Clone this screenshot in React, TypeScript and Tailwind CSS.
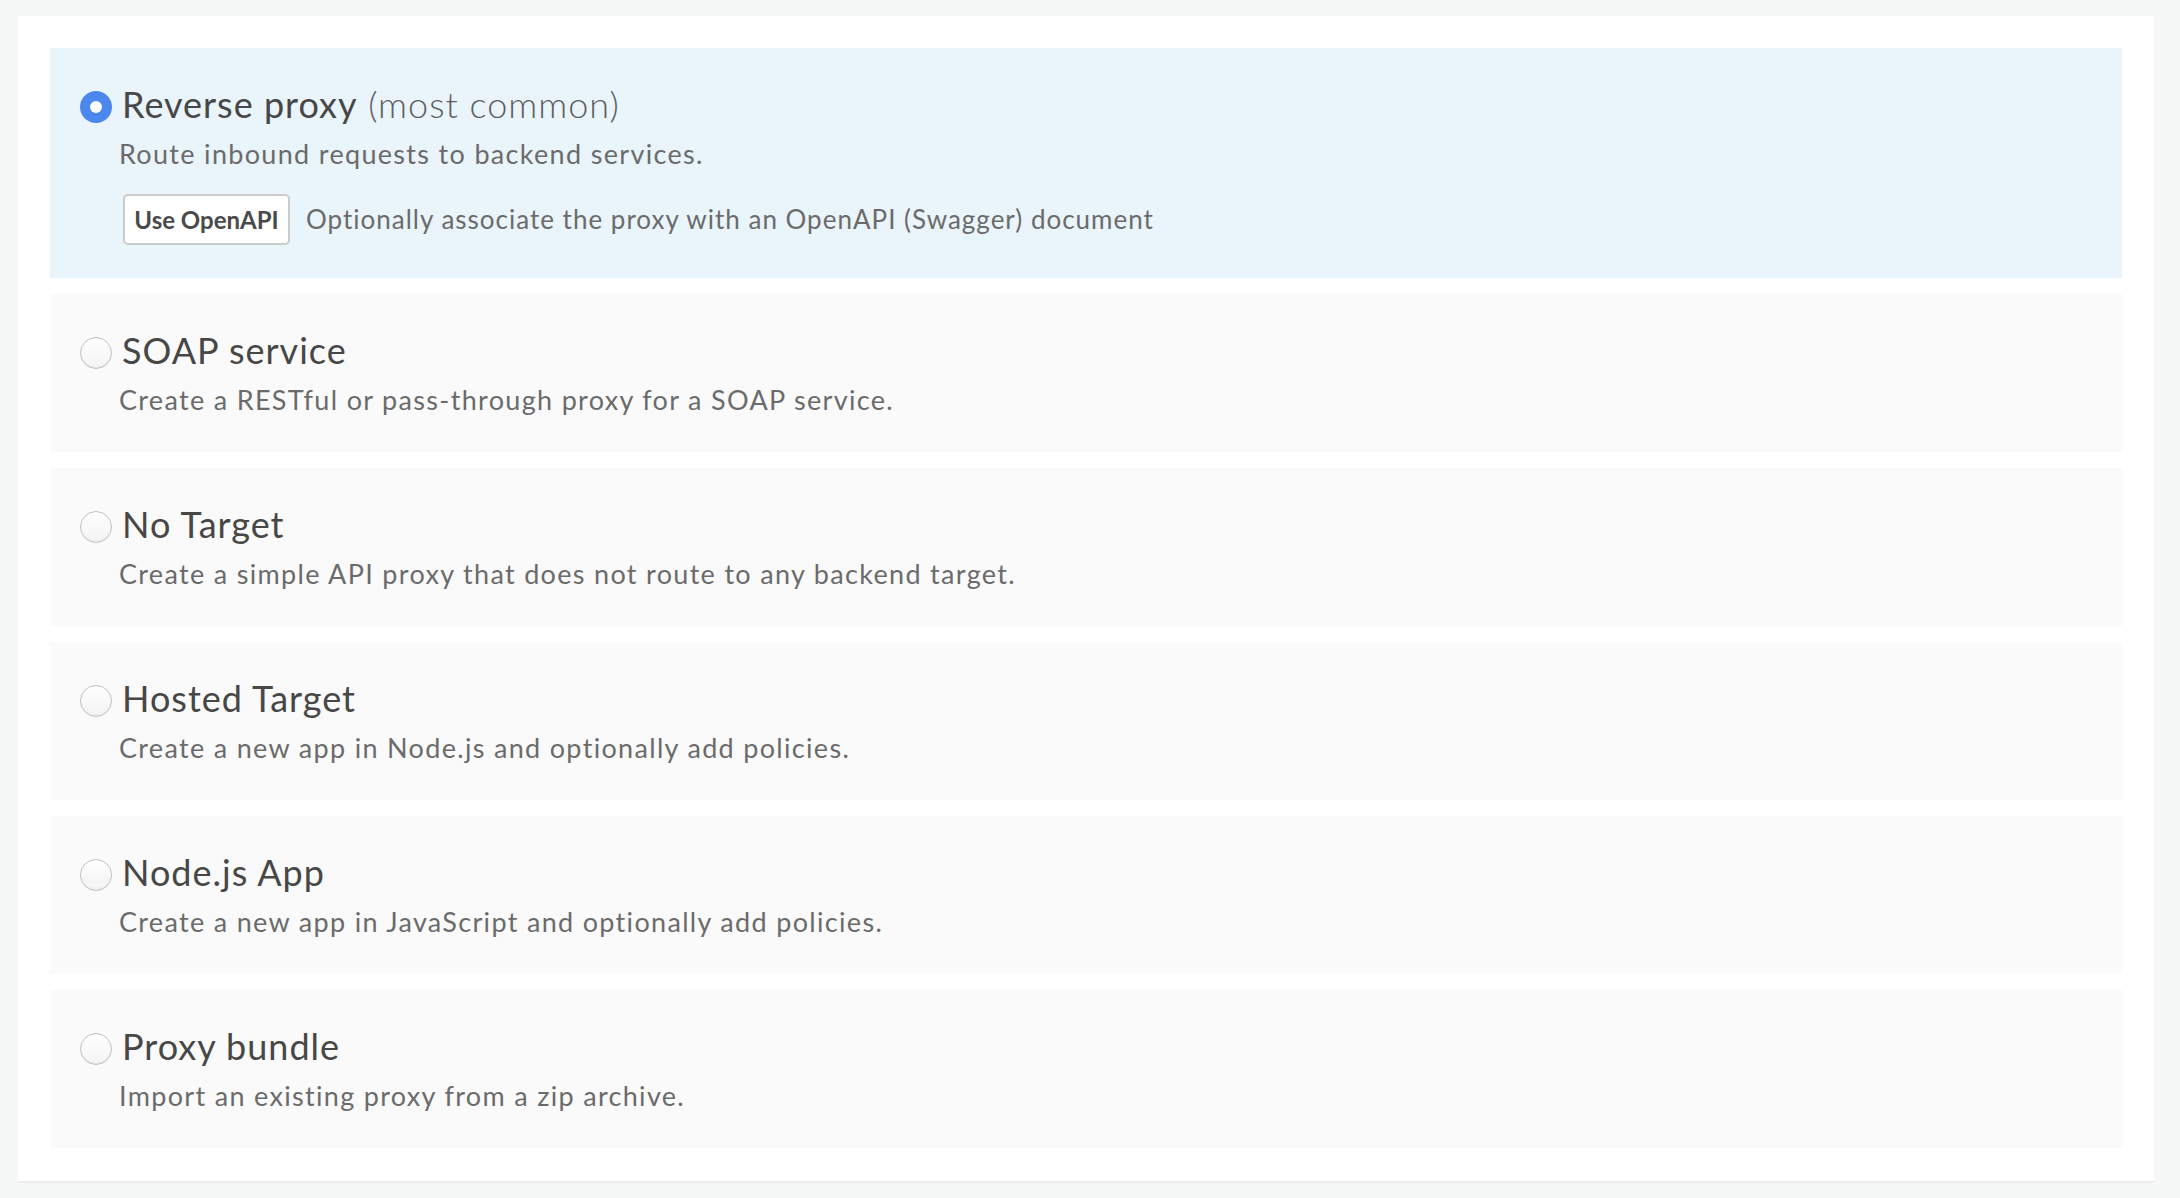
import React from "react";

type Opt = { title: string; extra?: string; desc: string; selected?: boolean; openapi?: boolean };

const options: Opt[] = [
  { title: "Reverse proxy", extra: "(most common)", desc: "Route inbound requests to backend services.", selected: true, openapi: true },
  { title: "SOAP service", desc: "Create a RESTful or pass-through proxy for a SOAP service." },
  { title: "No Target", desc: "Create a simple API proxy that does not route to any backend target." },
  { title: "Hosted Target", desc: "Create a new app in Node.js and optionally add policies." },
  { title: "Node.js App", desc: "Create a new app in JavaScript and optionally add policies." },
  { title: "Proxy bundle", desc: "Import an existing proxy from a zip archive." },
];

function Radio({ checked }: { checked?: boolean }) {
  if (checked) {
    return (
      <div className="mt-[4px] w-8 h-8 shrink-0 rounded-full bg-[#4b87ee] flex items-center justify-center">
        <div className="w-[12px] h-[12px] rounded-full bg-white" />
      </div>
    );
  }
  return (
    <div className="mt-[4px] w-8 h-8 shrink-0 rounded-full border-[1.5px] border-[#c2c2c2] bg-gradient-to-b from-[#ffffff] to-[#f3f3f3] shadow-[inset_0_-1px_1px_rgba(0,0,0,0.05)]" />
  );
}

export default function App() {
  return (
    <div className="min-h-[1198px] bg-[#f6f8f8] pt-4" style={{ fontFamily: "Lato, 'Open Sans', sans-serif" }}>
      <div className="ml-[18px] w-[2136px] bg-white px-8 pt-8 pb-[33px] border-b-2 border-[#eceeee]">
        <div className="flex flex-col gap-4">
          {options.map((o) => (
            <div
              key={o.title}
              className={`${o.selected ? "bg-[#e9f4fb] pb-[33px]" : "bg-[#fafafa] pb-[36px]"} pt-[35px] pl-[30px] pr-8`}
            >
              <div className="flex items-center gap-[10px] h-[43px]">
                <Radio checked={o.selected} />
                <div className="text-[36px] leading-[43px] text-[#474747] tracking-[1px] whitespace-nowrap">
                  {o.title}
                  {o.extra && <span className="font-light text-[#5e5e5e]"> {o.extra}</span>}
                </div>
              </div>
              <div className="ml-[39px] mt-[12px] text-[27px] leading-[32px] text-[#6b6b6b] tracking-[1.32px]">
                {o.desc}
              </div>
              {o.openapi && (
                <div className="ml-[43px] mt-[24px] flex items-center">
                  <button className="h-[51px] w-[167px] rounded-[5px] border-2 border-[#cbcbcb] bg-white text-[24px] font-bold text-[#4a4a4a]">
                    Use OpenAPI
                  </button>
                  <span className="ml-4 text-[26px] text-[#6b6b6b] tracking-[1px]">
                    Optionally associate the proxy with an OpenAPI (Swagger) document
                  </span>
                </div>
              )}
            </div>
          ))}
        </div>
      </div>
    </div>
  );
}
